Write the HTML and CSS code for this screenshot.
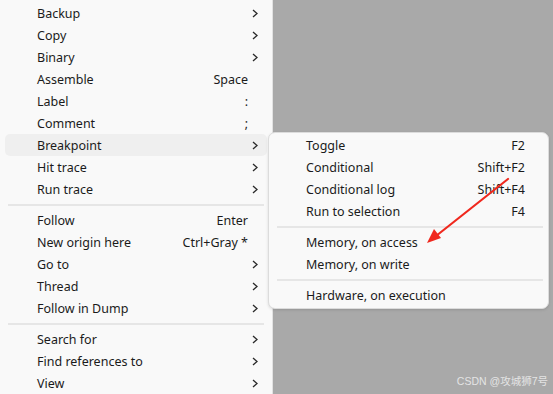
FILE: index.html
```html
<!DOCTYPE html>
<html>
<head>
<meta charset="utf-8">
<link rel="stylesheet" href="styles.css">
</head>
<body>
<div class="stage">
  <div class="menu main">
    <div class="item"><span class="label">Backup</span><span class="key"></span><span class="arrow"><svg width="6" height="9" viewBox="0 0 6 9"><path d="M1 1 L5 4.5 L1 8" fill="none" stroke="#2a2a2a" stroke-width="1.3"/></svg></span></div>
    <div class="item"><span class="label">Copy</span><span class="key"></span><span class="arrow"><svg width="6" height="9" viewBox="0 0 6 9"><path d="M1 1 L5 4.5 L1 8" fill="none" stroke="#2a2a2a" stroke-width="1.3"/></svg></span></div>
    <div class="item"><span class="label">Binary</span><span class="key"></span><span class="arrow"><svg width="6" height="9" viewBox="0 0 6 9"><path d="M1 1 L5 4.5 L1 8" fill="none" stroke="#2a2a2a" stroke-width="1.3"/></svg></span></div>
    <div class="item"><span class="label">Assemble</span><span class="key">Space</span><span class="arrow"></span></div>
    <div class="item"><span class="label">Label</span><span class="key">:</span><span class="arrow"></span></div>
    <div class="item"><span class="label">Comment</span><span class="key">;</span><span class="arrow"></span></div>
    <div class="item active"><span class="label">Breakpoint</span><span class="key"></span><span class="arrow"><svg width="6" height="9" viewBox="0 0 6 9"><path d="M1 1 L5 4.5 L1 8" fill="none" stroke="#2a2a2a" stroke-width="1.3"/></svg></span></div>
    <div class="item"><span class="label">Hit trace</span><span class="key"></span><span class="arrow"><svg width="6" height="9" viewBox="0 0 6 9"><path d="M1 1 L5 4.5 L1 8" fill="none" stroke="#2a2a2a" stroke-width="1.3"/></svg></span></div>
    <div class="item"><span class="label">Run trace</span><span class="key"></span><span class="arrow"><svg width="6" height="9" viewBox="0 0 6 9"><path d="M1 1 L5 4.5 L1 8" fill="none" stroke="#2a2a2a" stroke-width="1.3"/></svg></span></div>
    <div class="sep"></div>
    <div class="item"><span class="label">Follow</span><span class="key">Enter</span><span class="arrow"></span></div>
    <div class="item"><span class="label">New origin here</span><span class="key">Ctrl+Gray *</span><span class="arrow"></span></div>
    <div class="item"><span class="label">Go to</span><span class="key"></span><span class="arrow"><svg width="6" height="9" viewBox="0 0 6 9"><path d="M1 1 L5 4.5 L1 8" fill="none" stroke="#2a2a2a" stroke-width="1.3"/></svg></span></div>
    <div class="item"><span class="label">Thread</span><span class="key"></span><span class="arrow"><svg width="6" height="9" viewBox="0 0 6 9"><path d="M1 1 L5 4.5 L1 8" fill="none" stroke="#2a2a2a" stroke-width="1.3"/></svg></span></div>
    <div class="item"><span class="label">Follow in Dump</span><span class="key"></span><span class="arrow"><svg width="6" height="9" viewBox="0 0 6 9"><path d="M1 1 L5 4.5 L1 8" fill="none" stroke="#2a2a2a" stroke-width="1.3"/></svg></span></div>
    <div class="sep"></div>
    <div class="item"><span class="label">Search for</span><span class="key"></span><span class="arrow"><svg width="6" height="9" viewBox="0 0 6 9"><path d="M1 1 L5 4.5 L1 8" fill="none" stroke="#2a2a2a" stroke-width="1.3"/></svg></span></div>
    <div class="item"><span class="label">Find references to</span><span class="key"></span><span class="arrow"><svg width="6" height="9" viewBox="0 0 6 9"><path d="M1 1 L5 4.5 L1 8" fill="none" stroke="#2a2a2a" stroke-width="1.3"/></svg></span></div>
    <div class="item"><span class="label">View</span><span class="key"></span><span class="arrow"><svg width="6" height="9" viewBox="0 0 6 9"><path d="M1 1 L5 4.5 L1 8" fill="none" stroke="#2a2a2a" stroke-width="1.3"/></svg></span></div>
  </div>

  <div class="menu sub">
    <div class="item"><span class="label">Toggle</span><span class="key">F2</span></div>
    <div class="item"><span class="label">Conditional</span><span class="key">Shift+F2</span></div>
    <div class="item"><span class="label">Conditional log</span><span class="key">Shift+F4</span></div>
    <div class="item"><span class="label">Run to selection</span><span class="key">F4</span></div>
    <div class="sep"></div>
    <div class="item"><span class="label">Memory, on access</span><span class="key"></span></div>
    <div class="item"><span class="label">Memory, on write</span><span class="key"></span></div>
    <div class="sep"></div>
    <div class="item"><span class="label">Hardware, on execution</span><span class="key"></span></div>
  </div>

  <svg class="pointer" width="553" height="394" viewBox="0 0 553 394">
    <line x1="508" y1="179" x2="436" y2="236" stroke="#f0281e" stroke-width="2.2" stroke-linecap="round"/>
    <polygon points="427,243 434,229 441,238" fill="#f0281e"/>
  </svg>

  <div class="watermark">CSDN @攻城狮7号</div>
</div>
</body>
</html>
```

FILE: styles.css
```css
html, body {
  margin: 0;
  padding: 0;
}
body {
  background: #a9a9a9;
  font-family: "Noto Sans", "Noto Sans CJK SC", sans-serif;
  font-size: 12.5px;
  color: #1b1b1b;
}
.stage {
  position: relative;
  width: 553px;
  height: 394px;
  overflow: hidden;
}
.menu {
  background: #f9f9f9;
  box-sizing: border-box;
}
.main {
  width: 273px;
  padding: 2px 5px 0 5px;
  border-right: 1px solid #e2e2e2;
  height: 400px;
}
.item {
  display: grid;
  grid-template-columns: 1fr auto 19px;
  align-items: center;
  height: 22px;
  padding-left: 32px;
  border-radius: 5px;
  white-space: nowrap;
}
.item.active {
  background: #efefef;
}
.key {
  text-align: right;
}
.arrow {
  display: flex;
  align-items: center;
  padding-left: 4px;
}
.arrow svg {
  display: block;
}
.sep {
  height: 2px;
  background: #e6e6e6;
  margin: 4px 3px 3px 3px;
}
.sub {
  position: absolute;
  left: 268px;
  top: 132px;
  width: 281px;
  padding: 1px 5px 2px 5px;
  border: 1px solid #dcdcdc;
  border-radius: 7px;
  box-shadow: 0 1px 3px rgba(0,0,0,0.12);
}
.sub .item {
  grid-template-columns: 1fr auto;
  padding-right: 18px;
}
.sub .sep {
  margin: 4px 0 3px 3px;
}
.pointer {
  position: absolute;
  left: 0;
  top: 0;
}
.watermark {
  position: absolute;
  right: 5px;
  bottom: 6px;
  font-size: 10.5px;
  color: #e4e4e4;
  font-family: "Liberation Sans", "Noto Sans CJK SC", sans-serif;
}
```
